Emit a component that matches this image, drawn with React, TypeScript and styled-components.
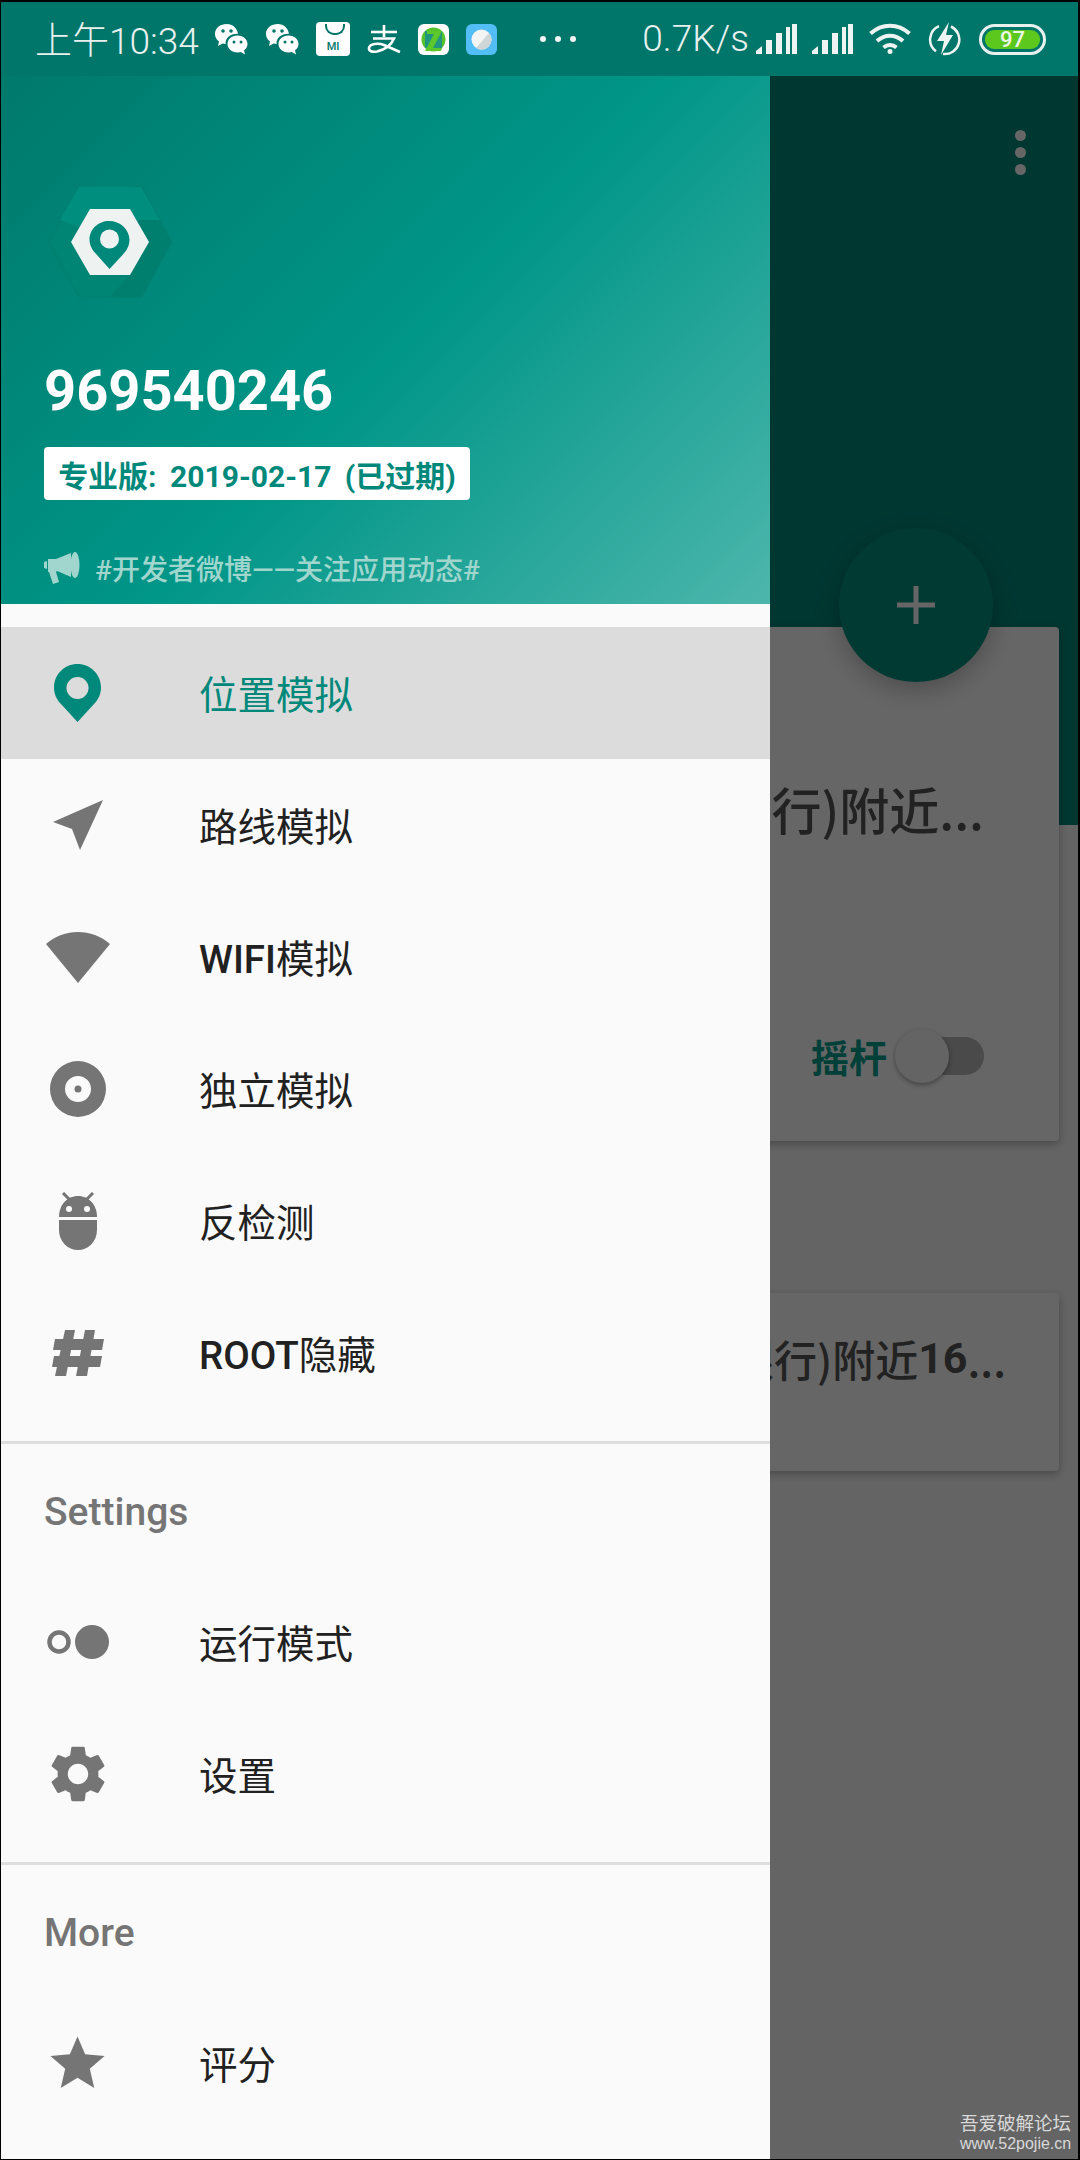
import React from "react";
import styled, { createGlobalStyle } from "styled-components";

const Global = createGlobalStyle`
  html, body { margin: 0; padding: 0; background: #000; }
  * { box-sizing: border-box; }
  body { font-family: Roboto, "Noto Sans CJK SC", sans-serif; }
`;

const Screen = styled.div`
  width: 1080px;
  height: 2160px;
  padding: 2px 2px 1px 1px;
  background: #000;
  display: flex;
  flex-direction: column;
  position: relative;
  overflow: hidden;
`;

/* ---------- status bar ---------- */
const StatusBar = styled.div`
  height: 74px;
  flex: none;
  background: #00766a;
  display: flex;
  align-items: center;
  padding: 0 32px 0 34px;
  color: #e9f1ef;
`;
const Time = styled.span`
  font-size: 37px;
  font-weight: 300;
  width: 179px;
  white-space: nowrap;
  margin-bottom: 2px;
`;
const NotifIcons = styled.div`
  display: flex;
  align-items: center;
  gap: 17px;
`;
const StatusDots = styled.div`
  display: flex;
  gap: 9px;
  margin-left: 43px;
`;
const StatusDot = styled.span`
  width: 6px;
  height: 6px;
  border-radius: 50%;
  background: #f2f6f5;
`;
const StatusRight = styled.div`
  margin-left: auto;
  display: flex;
  align-items: center;
`;
const Speed = styled.span`
  font-size: 37px;
  font-weight: 300;
  margin-right: 7px;
  margin-bottom: 2px;
`;
const MiTile = styled.div`
  width: 34px;
  height: 34px;
  border-radius: 4px;
  background: #fff;
  position: relative;
  display: flex;
  justify-content: center;
  align-items: flex-end;
  padding-bottom: 4px;
  font-size: 11px;
  line-height: 11px;
  font-weight: 500;
  color: #00766a;
  &::before {
    content: "";
    position: absolute;
    top: 2px;
    left: 9px;
    width: 16px;
    height: 9px;
    border: 2px solid #00766a;
    border-top: none;
    border-radius: 0 0 9px 9px;
  }
`;
const Battery = styled.div`
  width: 67px;
  height: 31px;
  border: 3px solid #e9f1ef;
  border-radius: 16px;
  padding: 3px;
  margin-left: 17px;
  display: flex;
`;
const BatteryFill = styled.div`
  flex: 1;
  background: #5cc81e;
  border-radius: 9px;
  color: #eef6e6;
  font-size: 22px;
  line-height: 19px;
  font-weight: 500;
  text-align: center;
`;

/* ---------- content ---------- */
const Content = styled.div`
  flex: 1;
  position: relative;
  overflow: hidden;
  background: #fafafa;
`;
const AppBar = styled.div`
  height: 749px;
  background: #00897b;
  display: flex;
  justify-content: flex-end;
  padding: 54px 52px 0 0;
`;
const OverflowMenu = styled.div`
  display: flex;
  flex-direction: column;
  gap: 6px;
`;
const OverflowDot = styled.span`
  width: 11px;
  height: 11px;
  border-radius: 50%;
  background: #ffffff;
`;
const Cards = styled.div`
  margin-top: -198px;
  position: relative;
  padding-right: 19px;
  display: flex;
  flex-direction: column;
  gap: 152px;
`;
const Card = styled.div<{ $h: number }>`
  height: ${(p) => p.$h}px;
  background: #ffffff;
  border-radius: 4px;
  box-shadow: 0 3px 8px rgba(0, 0, 0, 0.28);
  overflow: hidden;
`;
const CardTitle = styled.div<{ $size: number; $top: number; $right: number }>`
  display: flex;
  justify-content: flex-end;
  white-space: nowrap;
  font-family: "Noto Sans CJK SC", sans-serif;
  font-size: ${(p) => p.$size}px;
  line-height: 60px;
  font-weight: 500;
  color: #555;
  margin-top: ${(p) => p.$top}px;
  padding-right: ${(p) => p.$right}px;
`;
const LatinBold = styled.span`
  font-family: Roboto, sans-serif;
  font-weight: 700;
`;
const CardFoot = styled.div`
  display: flex;
  justify-content: flex-end;
  align-items: center;
  gap: 19px;
  margin-top: 190px;
  padding-right: 75px;
`;
const JoystickLabel = styled.span`
  font-size: 38px;
  font-weight: 700;
  color: #00a08f;
`;
const Switch = styled.div`
  width: 78px;
  height: 38px;
  border-radius: 19px;
  background: #b8b8b8;
  position: relative;
`;
const SwitchThumb = styled.div`
  position: absolute;
  left: -11px;
  top: -8px;
  width: 54px;
  height: 54px;
  border-radius: 50%;
  background: #fafafa;
  box-shadow: 0 2px 5px rgba(0, 0, 0, 0.35);
`;
const Fab = styled.div`
  position: absolute;
  left: 838px;
  top: 452px;
  width: 154px;
  height: 154px;
  border-radius: 50%;
  background: #00917f;
  box-shadow: 0 8px 24px rgba(0, 0, 0, 0.25);
  display: flex;
  align-items: center;
  justify-content: center;
`;
const Scrim = styled.div`
  position: absolute;
  inset: 0;
  background: rgba(0, 0, 0, 0.6);
`;

/* ---------- drawer ---------- */
const Drawer = styled.aside`
  position: absolute;
  left: 0;
  top: 0;
  bottom: 0;
  width: 769px;
  background: #fafafa;
  display: flex;
  flex-direction: column;
`;
const Header = styled.header`
  height: 528px;
  flex: none;
  background: linear-gradient(135deg, #00796b 0%, #009688 52%, #4db6ac 100%);
  display: flex;
  flex-direction: column;
  padding: 109px 0 0 43px;
`;
const Logo = styled.svg`
  display: block;
  margin-left: 3px;
  width: 126px;
  height: 114px;
`;
const UserId = styled.div`
  margin-top: 60px;
  font-size: 56px;
  line-height: 64px;
  font-weight: 700;
  color: #fff;
`;
const Badge = styled.div`
  margin-top: 24px;
  align-self: flex-start;
  height: 53px;
  width: 426px;
  border-radius: 4px;
  background: #fff;
  display: flex;
  align-items: center;
  justify-content: center;
  font-size: 30px;
  word-spacing: 6px;
  font-weight: 700;
  color: #00897b;
  white-space: nowrap;
`;
const Notice = styled.div`
  margin-top: 48px;
  display: flex;
  align-items: center;
  gap: 15px;
  font-size: 28px;
  font-weight: 500;
  color: #a0d6ce;
  white-space: nowrap;
`;
const Menu = styled.nav`
  padding-top: 23px;
  display: flex;
  flex-direction: column;
`;
const Row = styled.div<{ $active?: boolean }>`
  height: 132px;
  display: grid;
  grid-template-columns: 153px 1fr;
  column-gap: 45px;
  align-items: center;
  background: ${(p) => (p.$active ? "#dcdcdc" : "transparent")};
  color: ${(p) => (p.$active ? "#00897b" : "#212121")};
  font-size: 38.5px;
  white-space: nowrap;
`;
const RowLabel = styled.span`
  margin-bottom: 3px;
`;
const IconSlot = styled.div`
  display: flex;
  justify-content: center;
  align-items: center;
`;
const Latin = styled.span`
  font-weight: 500;
`;
const Divider = styled.div`
  height: 3px;
  margin-top: 22px;
  background: #dedede;
`;
const SectionTitle = styled.div`
  height: 132px;
  display: flex;
  align-items: center;
  padding: 3px 0 0 43px;
  font-size: 39px;
  font-weight: 500;
  color: #757575;
`;
const Watermark = styled.div`
  position: absolute;
  right: 9px;
  bottom: 6px;
  width: 111px;
  color: #d9d9d9;
  text-align: center;
`;
const WatermarkCn = styled.div`
  font-size: 18.5px;
  line-height: 24px;
  font-family: "Noto Sans CJK SC", sans-serif;
`;
const WatermarkUrl = styled.div`
  font-size: 16px;
  line-height: 20px;
  font-family: "Liberation Sans", sans-serif;
  white-space: nowrap;
`;

/* ---------- icons ---------- */
const G = "#757575";

const WeChat = () => (
  <svg width="34" height="32" viewBox="0 0 34 32">
    <path d="M13 1C6 1 1 5 1 11c0 3 1.600 5.600 4 7.400L4 23l4.600-2.600c1 .3 2 .4 3 .5C11 15 16 10.500 24 10.700 23 5 18.600 1 13 1z" fill="#fff" />
    <circle cx="9" cy="8" r="1.800" fill="#00766a" />
    <circle cx="17" cy="8" r="1.800" fill="#00766a" />
    <path d="M23.500 12.500c-5.800 0-10 3.800-10 8.500s4.200 8.500 10 8.500c1.200 0 2.300-.2 3.300-.5l4.200 2.500-1-4.200c2.300-1.500 3.500-4 3.500-6.300 0-4.700-4.200-8.500-10-8.500z" fill="#fff" />
    <circle cx="20" cy="19" r="1.500" fill="#00766a" />
    <circle cx="27" cy="19" r="1.500" fill="#00766a" />
  </svg>
);
const Alipay = () => (
  <svg width="34" height="30" viewBox="0 0 34 30" fill="none" stroke="#fff" strokeWidth="2.600">
    <path d="M4 8h26" />
    <path d="M17 1v12" />
    <path d="M6 14.500h21c-2.500 6-9 11-17 13-5 1-8.500-.5-8-3.500.6-4 9-5.500 15-3 5 2 10 4.500 16 7" />
  </svg>
);
const GreenApp = () => (
  <svg width="31" height="31" viewBox="0 0 31 31">
    <rect width="31" height="31" rx="6" fill="#fff" />
    <circle cx="15.500" cy="15.500" r="12" fill="#55c22a" />
    <rect x="7" y="7" width="17" height="17" fill="#21967f" />
    <path d="M9 7h15l-9 17h9l-1 3H7l9-17H9z" fill="#5cc82a" />
  </svg>
);
const BlueApp = () => (
  <svg width="31" height="31" viewBox="0 0 31 31">
    <rect width="31" height="31" rx="6" fill="#53bdf5" />
    <circle cx="15.500" cy="15.500" r="10" fill="#f3f5f5" />
    <path d="M23 9a10 10 0 0 1-13 15z" fill="#cfd6d8" />
  </svg>
);
const Signal = ({ ml }: { ml: number }) => (
  <svg width="41" height="30" viewBox="0 0 41 30" style={{ marginLeft: ml }} fill="#edf4f2">
    <path d="M0 30v-3l6-5v8z" />
    <rect x="10" y="16" width="6" height="14" />
    <rect x="20" y="9" width="6" height="21" />
    <rect x="30" y="3" width="4" height="27" />
    <rect x="36" y="0" width="5" height="30" />
  </svg>
);
const Wifi = () => (
  <svg width="42" height="32" viewBox="0 0 42 32" style={{ marginLeft: 16 }} fill="none" stroke="#edf4f2" strokeWidth="4">
    <path d="M1.500 10.500C13 0 29 0 40.500 10.500" />
    <path d="M8 18c8-7 18-7 26 0" />
    <path d="M14.500 24.500c4-3.200 9-3.200 13 0" />
    <circle cx="21" cy="28.500" r="2.500" fill="#edf4f2" stroke="none" />
  </svg>
);
const Charging = () => (
  <svg width="34" height="34" viewBox="0 0 34 34" style={{ marginLeft: 17 }}>
    <path d="M11 4.200a14.500 14.500 0 0 0-3 25M23 4.500a14.500 14.500 0 0 1-8 27.500" fill="none" stroke="#edf4f2" strokeWidth="2.500" />
    <path d="M21 0 9 19h7l-3 14 12-20h-7z" fill="#edf4f2" />
  </svg>
);
const LogoMark = () => (
  <Logo viewBox="0 0 126 114">
    <path d="M32 2h62l30 55-30 55H32L2 57z" fill="#008474" stroke="#008272" strokeWidth="3" strokeLinejoin="round" />
    <path d="M32 2h62l19 33H90L43 24 33 42 13 35z" fill="#008f7f" />
    <path d="M113 35l11 22-30 55H62L83 90l19-33-12-22z" fill="#007f6f" />
    <path d="M43 24h40l19 33-19 33H43L24 57z" fill="#eef3f2" />
    <path d="M62 36c-10.500 0-19.500 8-19.500 18.500 0 7 4 12 7.500 15.500l12.500 14 13-14c3.500-3.500 7-8.500 7-15.500C82 44 73 36 62 36z" fill="#00897b" />
    <circle cx="62.500" cy="54" r="9.500" fill="#eef3f2" />
  </Logo>
);
const Megaphone = () => (
  <svg width="36" height="32" viewBox="0 0 36 32" fill="#a0d6ce">
    <path d="M0 10l3-1v8l-3-1z" />
    <path d="M4 7h8L27 1v24L13 19l-1 1 3 10-6 2-4-12H4z" />
    <ellipse cx="31" cy="13" rx="4.500" ry="13" />
  </svg>
);
const Pin = () => (
  <svg width="47" height="58" viewBox="0 0 47 58">
    <path fillRule="evenodd" d="M23.500 0C10.500 0 0 10.500 0 23.500c0 7 3 12.500 7 16.500l16.500 18L40 40c4-4 7-9.500 7-16.500C47 10.500 36.500 0 23.500 0zm0 13a11 11 0 1 1 0 22 11 11 0 0 1 0-22z" fill="#00897b" />
  </svg>
);
const NavArrow = () => (
  <svg width="50" height="50" viewBox="0 0 50 50">
    <path d="M50 0 0 22l19 7 8 21z" fill={G} />
  </svg>
);
const WifiSector = () => (
  <svg width="64" height="51" viewBox="0 0 64 51">
    <path d="M0 12C18-4 46-4 64 12L32 51z" fill={G} />
  </svg>
);
const Disc = () => (
  <svg width="56" height="56" viewBox="0 0 56 56">
    <path fillRule="evenodd" d="M28 0a28 28 0 1 1 0 56 28 28 0 0 1 0-56zm0 15a13 13 0 1 0 0 26 13 13 0 0 0 0-26z" fill={G} />
    <circle cx="28" cy="28" r="3.500" fill={G} />
  </svg>
);
const Android = () => (
  <svg width="40" height="58" viewBox="0 0 40 58">
    <path d="M5 1l7 7M35 1l-7 7" stroke={G} strokeWidth="3" />
    <path d="M1 25C1 13 9 4 20 4s19 9 19 21z" fill={G} />
    <circle cx="11" cy="17" r="3" fill="#fafafa" />
    <circle cx="29" cy="17" r="3" fill="#fafafa" />
    <path d="M1 28h38v10a19 20 0 0 1-38 0z" fill={G} />
  </svg>
);
const Hash = () => (
  <svg width="52" height="46" viewBox="0 0 52 46" fill={G}>
    <path d="M13 0h10l-9 46H3z" />
    <path d="M33 0h10l-8 46H24z" />
    <path d="M3 9h49l-2 11H1z" />
    <path d="M2 26h48l-2 11H0z" />
  </svg>
);
const ModeDots = () => (
  <svg width="62" height="34" viewBox="0 0 62 34">
    <ellipse cx="12" cy="17" rx="9.500" ry="9.500" fill="none" stroke={G} strokeWidth="4.500" />
    <circle cx="45" cy="17" r="17" fill={G} />
  </svg>
);
const Gear = () => (
  <svg width="68" height="68" viewBox="0 0 24 24">
    <path fill={G} d="M19.140 12.940c.04-.3.060-.61.060-.94 0-.32-.02-.64-.07-.94l2.030-1.580c.18-.14.230-.41.120-.61l-1.920-3.320c-.12-.22-.37-.29-.59-.22l-2.390.96c-.5-.38-1.030-.7-1.620-.94l-.36-2.540c-.04-.24-.24-.41-.48-.41h-3.840c-.24 0-.43.17-.47.41l-.36 2.540c-.59.24-1.130.57-1.620.94l-2.390-.96c-.22-.08-.47 0-.59.22L2.740 8.870c-.12.21-.08.47.12.61l2.030 1.580c-.05.3-.09.63-.09.94s.02.64.07.94l-2.030 1.580c-.18.14-.23.41-.12.61l1.920 3.320c.12.22.37.29.59.22l2.390-.96c.5.38 1.030.7 1.620.94l.36 2.540c.05.24.24.41.48.41h3.840c.24 0 .44-.17.47-.41l.36-2.540c.59-.24 1.130-.56 1.620-.94l2.390.96c.22.08.47 0 .59-.22l1.920-3.320c.12-.22.07-.47-.12-.61l-2.010-1.580zM12 15.600c-1.980 0-3.600-1.620-3.600-3.600s1.620-3.600 3.600-3.600 3.600 1.620 3.600 3.600-1.620 3.600-3.600 3.600z" />
  </svg>
);
const Star = () => (
  <svg width="65" height="65" viewBox="0 0 24 24">
    <path fill={G} d="M12 17.270 18.180 21l-1.640-7.030L22 9.240l-7.190-.61L12 2 9.190 8.630 2 9.240l5.460 4.730L5.820 21z" />
  </svg>
);
const Plus = () => (
  <svg width="38" height="38" viewBox="0 0 38 38" fill="#fff">
    <rect x="16.500" y="0" width="5" height="38" />
    <rect x="0" y="16.500" width="38" height="5" />
  </svg>
);

const App = () => (
  <>
    <Global />
    <Screen>
      <StatusBar>
        <Time>上午10:34</Time>
        <NotifIcons>
          <WeChat />
          <WeChat />
          <MiTile>MI</MiTile>
          <Alipay />
          <GreenApp />
          <BlueApp />
        </NotifIcons>
        <StatusDots>
          <StatusDot />
          <StatusDot />
          <StatusDot />
        </StatusDots>
        <StatusRight>
          <Speed>0.7K/s</Speed>
          <Signal ml={0} />
          <Signal ml={15} />
          <Wifi />
          <Charging />
          <Battery>
            <BatteryFill>97</BatteryFill>
          </Battery>
        </StatusRight>
      </StatusBar>

      <Content>
        <AppBar>
          <OverflowMenu>
            <OverflowDot />
            <OverflowDot />
            <OverflowDot />
          </OverflowMenu>
        </AppBar>
        <Cards>
          <Card $h={514}>
            <CardTitle $size={50} $top={151} $right={75}>
              上海市(人民银行)附近...
            </CardTitle>
            <CardFoot>
              <JoystickLabel>摇杆</JoystickLabel>
              <Switch>
                <SwitchThumb />
              </Switch>
            </CardFoot>
          </Card>
          <Card $h={178}>
            <CardTitle $size={43} $top={35} $right={53}>
              上海市(人民银行)附近<LatinBold>16</LatinBold>...
            </CardTitle>
          </Card>
        </Cards>
        <Fab>
          <Plus />
        </Fab>
        <Scrim />

        <Drawer>
          <Header>
            <LogoMark />
            <UserId>969540246</UserId>
            <Badge>专业版: 2019-02-17 (已过期)</Badge>
            <Notice>
              <Megaphone />
              #开发者微博——关注应用动态#
            </Notice>
          </Header>
          <Menu>
            <Row $active>
              <IconSlot><Pin /></IconSlot>
              <RowLabel>位置模拟</RowLabel>
            </Row>
            <Row>
              <IconSlot><NavArrow /></IconSlot>
              <RowLabel>路线模拟</RowLabel>
            </Row>
            <Row>
              <IconSlot><WifiSector /></IconSlot>
              <RowLabel><Latin>WIFI</Latin>模拟</RowLabel>
            </Row>
            <Row>
              <IconSlot><Disc /></IconSlot>
              <RowLabel>独立模拟</RowLabel>
            </Row>
            <Row>
              <IconSlot><Android /></IconSlot>
              <RowLabel>反检测</RowLabel>
            </Row>
            <Row>
              <IconSlot><Hash /></IconSlot>
              <RowLabel><Latin>ROOT</Latin>隐藏</RowLabel>
            </Row>
            <Divider />
            <SectionTitle>Settings</SectionTitle>
            <Row>
              <IconSlot><ModeDots /></IconSlot>
              <RowLabel>运行模式</RowLabel>
            </Row>
            <Row>
              <IconSlot><Gear /></IconSlot>
              <RowLabel>设置</RowLabel>
            </Row>
            <Divider />
            <SectionTitle>More</SectionTitle>
            <Row>
              <IconSlot><Star /></IconSlot>
              <RowLabel>评分</RowLabel>
            </Row>
          </Menu>
        </Drawer>
      </Content>

      <Watermark>
        <WatermarkCn>吾爱破解论坛</WatermarkCn>
        <WatermarkUrl>www.52pojie.cn</WatermarkUrl>
      </Watermark>
    </Screen>
  </>
);

export default App;
